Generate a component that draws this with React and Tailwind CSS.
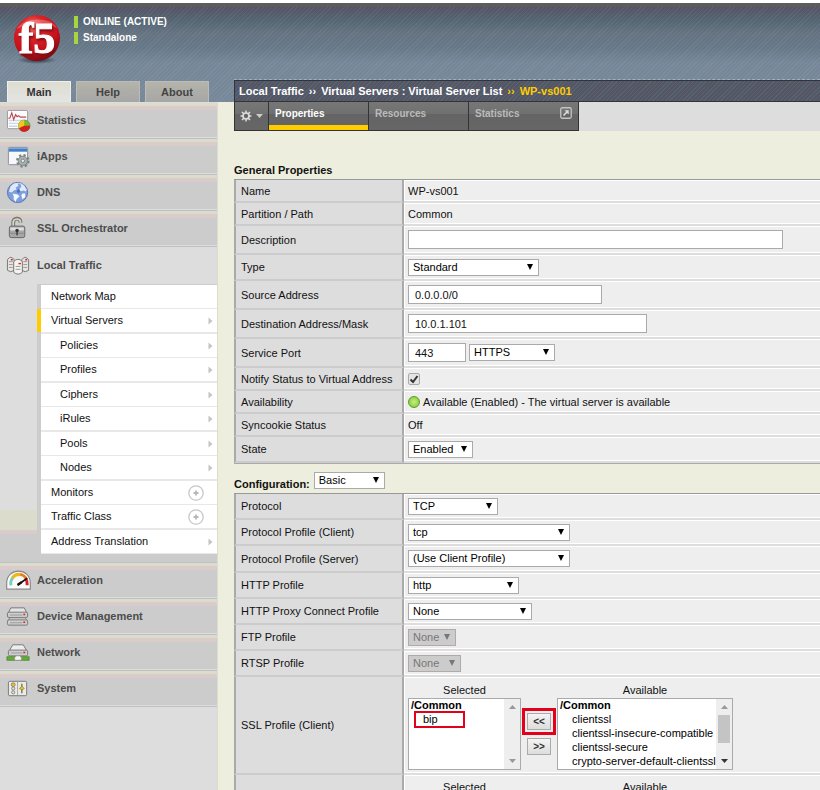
import { useState } from "react";
import clsx from "clsx";

function Logo() {
  return (
    <svg viewBox="0 0 52 52" className="h-[52px] w-[52px] overflow-visible" role="img" aria-label="f5">
      <defs>
        <radialGradient id="ball" cx="0.4" cy="0.25" r="0.8">
          <stop offset="0" stopColor="#f07a76" />
          <stop offset="0.3" stopColor="#dc2429" />
          <stop offset="0.7" stopColor="#c4101a" />
          <stop offset="1" stopColor="#6d0a10" />
        </radialGradient>
        <radialGradient id="floor">
          <stop offset="0" stopColor="#2b3038" />
          <stop offset="1" stopColor="#2b3038" stopOpacity="0" />
        </radialGradient>
      </defs>
      <ellipse cx="26" cy="47" rx="20" ry="4" fill="url(#floor)" />
      <circle cx="26" cy="25" r="23" fill="url(#ball)" />
      <path d="M6 16C12 4 40 3 46 15C34 9 18 9 6 16Z" fill="#fff" opacity="0.25" />
      <text
        x="26"
        y="40"
        textAnchor="middle"
        fontSize="44"
        fontWeight="bold"
        fontFamily="Liberation Serif, serif"
        fill="#fff"
        stroke="#fff"
        className="drop-shadow-[1px_2px_1px_#7c0c12]"
      >
        f5
      </text>
    </svg>
  );
}

const icons = {
  statistics: (
    <>
      <rect x="1.5" y="2.500" width="21" height="19" rx="1.500" fill="#fdfdfd" stroke="#999" />
      <path d="M3 13H21M3 16H14M3 19H12" stroke="#ccd6e6" strokeWidth="1.500" />
      <path d="M2.500 11L4 10.500L6 5L8 12L10 7L11.500 9L13 8L15 9.500H21" fill="none" stroke="#b94a55" strokeWidth="1.200" />
      <circle cx="19" cy="18.500" r="6" fill="#7ab82c" stroke="#665" strokeWidth="0.600" />
      <path d="M19 18.500V12.500A6 6 0 0 0 13.500 21Z" fill="#f2c61c" />
      <path d="M19 18.500L13.500 21A6 6 0 0 0 25 18.500Z" fill="#d3221c" />
    </>
  ),
  iapps: (
    <>
      <rect x="2.500" y="3.500" width="20" height="18" rx="1" fill="#f6f8fb" stroke="#888f99" />
      <path d="M3 4H22V8H3Z" fill="#4680c4" />
      <path d="M3 4.500H22" stroke="#86b4e6" />
      <circle cx="17.500" cy="17.500" r="5.800" fill="none" stroke="#7b8583" strokeWidth="2.600" strokeDasharray="2.300 2.250" />
      <circle cx="17.500" cy="17.500" r="4.800" fill="#a9b2b0" stroke="#7b8583" />
      <circle cx="17.500" cy="17.500" r="1.800" fill="#e9ecec" stroke="#7b8583" />
    </>
  ),
  dns: (
    <>
      <circle cx="12" cy="13" r="10.500" fill="#7f9fdc" stroke="#5573b2" />
      <path d="M4 9C5 5 9 3 12 3.500L13 6L10 8L11 10L8 11L6 13L3 12Z" fill="#dfeafc" />
      <path d="M15 4L19 6L21.500 10L21 12L18 11L15 12L14 9L16 7Z" fill="#dfeafc" />
      <path d="M7 14L12 15L14 17L11 20L10 23L8 20L8 17Z" fill="#f4f8ff" />
      <path d="M17 14L20 14L20 18L17 20L16 16Z" fill="#f4f8ff" />
      <path d="M13 9L15 12L13 14L11 12Z" fill="#4c70bb" />
      <path d="M5 7C8 3 15 2 19 6" stroke="#dce8ff" fill="none" opacity="0.800" />
    </>
  ),
  ssl: (
    <>
      <path d="M7.500 12V7C7.500 1.500 15 1.500 15 6V7" fill="none" stroke="#777769" strokeWidth="4" />
      <path d="M7.500 12V7C7.500 2 15 2 15 6V7" fill="none" stroke="#d8d8cc" strokeWidth="1.800" />
      <rect x="3.500" y="10.500" width="16" height="12" rx="2" fill="#a7a7a7" stroke="#666" />
      <path d="M4.500 12H18.500V15H4.500Z" fill="#dedede" />
      <path d="M4.500 18H18.500" stroke="#888" />
      <circle cx="11.500" cy="15" r="1.800" fill="#333" />
      <path d="M10.800 15H12.200V20H10.800Z" fill="#333" />
    </>
  ),
  traffic: (
    <>
      {[0, 15].map((x) => (
        <g key={x}>
          <path d={`M${x + 1.5} 7Q${x + 5} 2 ${x + 8.5} 7V18Q${x + 5} 21 ${x + 1.5} 18Z`} fill="#e6e6e2" stroke="#777" />
          <path d={`M${x + 3} 9H${x + 7}M${x + 3} 12H${x + 7}M${x + 3} 15H${x + 7}`} stroke="#999" />
          <path d={`M${x + 5} 7H${x + 7}`} stroke="#d22" strokeWidth="1.500" />
        </g>
      ))}
      <path d="M8 9Q12.500 4 17 9V20Q12.500 24 8 20Z" fill="#f3f3f0" stroke="#777" />
      <path d="M10 14H15M10 17H15" stroke="#999" />
      <path d="M13 11H15.500" stroke="#d22" strokeWidth="1.500" />
    </>
  ),
  acceleration: (
    <>
      <path d="M0.700 22V16C0.700 -1 25.300 -1 25.300 16V22Z" fill="#fafafa" stroke="#888" strokeWidth="1.200" />
      <path d="M5 18C4.500 14 5.500 12 7 10" fill="none" stroke="#72cfc6" strokeWidth="3" />
      <path d="M6.500 10.500C9 7 12 6 16 7" fill="none" stroke="#eab818" strokeWidth="3.200" />
      <path d="M15 6.500C18 7.500 20 9 21 11" fill="none" stroke="#ee7a20" strokeWidth="3" />
      <path d="M20.500 11C22 13 22 15 22 18" fill="none" stroke="#d5202a" strokeWidth="3" />
      <path d="M12 18L22 10.500" stroke="#111" strokeWidth="1.800" />
      <path d="M11.500 16.500L16 13.500L17 15.500L13 18.500Z" fill="#111" />
    </>
  ),
  device: (
    <>
      <path d="M2 10L5 4H19L22 10V13H2Z" fill="#e4e4e4" stroke="#777" />
      <rect x="1.500" y="8.500" width="21" height="5.500" rx="1.500" fill="#cfcfcf" stroke="#777" />
      <path d="M4 14.500H20L22 17H2Z" fill="#ececec" stroke="#888" />
      <rect x="1.500" y="16.500" width="21" height="5.500" rx="1.500" fill="#cfcfcf" stroke="#777" />
      <path d="M4 11.500H17M4 19.500H17" stroke="#999" />
      <path d="M18 11H20M18 19H20" stroke="#d22" strokeWidth="1.600" />
    </>
  ),
  network: (
    <>
      <path d="M3 12L7 5H18L22 12Z" fill="#ededed" stroke="#777" />
      <rect x="2.500" y="10.500" width="20" height="6" rx="1.500" fill="#cfcfcf" stroke="#777" />
      <path d="M5 13.500H17" stroke="#999" />
      <path d="M18 13H20" stroke="#d22" strokeWidth="1.600" />
      <rect x="1" y="17.500" width="23" height="3.500" fill="#62b42c" stroke="#4a7a30" strokeWidth="0.800" />
      <path d="M9 21V18L11 16.500H14L16 18V21Z" fill="#f4f4f4" stroke="#888" strokeWidth="0.600" />
    </>
  ),
  system: (
    <>
      <rect x="2.500" y="5.500" width="19" height="15" rx="1.500" fill="#ebebe6" stroke="#777" />
      <path d="M12 6V20" stroke="#aaa" />
      <circle cx="7.500" cy="9" r="2" fill="#f0c020" stroke="#777" strokeWidth="0.800" />
      <circle cx="7.500" cy="13" r="1.700" fill="#ddd" stroke="#777" strokeWidth="0.800" />
      <circle cx="7.500" cy="17" r="1.700" fill="#ddd" stroke="#777" strokeWidth="0.800" />
      <path d="M16.500 8V18" stroke="#666" strokeWidth="1.300" />
      <path d="M14 13L16.500 10.500L19 13L16.500 14.500Z" fill="#f0c020" stroke="#8a7420" strokeWidth="0.700" />
    </>
  ),
};

const topMenu = [
  { name: "Statistics", icon: "statistics" },
  { name: "iApps", icon: "iapps" },
  { name: "DNS", icon: "dns" },
  { name: "SSL Orchestrator", icon: "ssl" },
];

const bottomMenu = [
  { name: "Acceleration", icon: "acceleration" },
  { name: "Device Management", icon: "device" },
  { name: "Network", icon: "network" },
  { name: "System", icon: "system" },
];

const trafficMenu = [
  { name: "Network Map" },
  { name: "Virtual Servers", mark: "arrow", active: true },
  { name: "Policies", mark: "arrow", nested: true },
  { name: "Profiles", mark: "arrow", nested: true },
  { name: "Ciphers", mark: "arrow", nested: true },
  { name: "iRules", mark: "arrow", nested: true },
  { name: "Pools", mark: "arrow", nested: true },
  { name: "Nodes", mark: "arrow", nested: true },
  { name: "Monitors", mark: "plus" },
  { name: "Traffic Class", mark: "plus" },
  { name: "Address Translation", mark: "arrow" },
];

function MenuRow({ item, open }) {
  return (
    <a
      href="#"
      className={clsx(
        "flex items-center gap-[6px] pl-[6px] font-bold text-[#4c4c4c]",
        open
          ? "h-[37px] bg-[#ddd]"
          : "h-9 border-b border-[#bfc0c4] bg-[linear-gradient(#dcdccc_3px,#dbcccc_3px,#dbcccc_7px,#ccc_7px,#ccc_34px,#ddd_34px)]"
      )}
    >
      <svg viewBox="0 0 26 26" className="h-[25px] w-[25px]" aria-hidden="true">
        {icons[item.icon]}
      </svg>
      <span className="pb-px">{item.name}</span>
    </a>
  );
}

function SubMenu() {
  return (
    <ul className="ml-[37px] border-t border-l-4 border-[#ccc] bg-white">
      {trafficMenu.map((item) => (
        <li
          key={item.name}
          className="h-6 border-[#e8e8e8] odd:border-b even:h-[25px] even:border-b-2"
        >
          <a
            href="#"
            className={clsx(
              "-ml-1 flex h-full items-center border-l-4 pr-1",
              item.active ? "border-[#fc0]" : "border-transparent",
              item.nested ? "pl-[19px]" : "pl-[10px]"
            )}
          >
            <span className="flex-1 pb-px">{item.name}</span>
            {item.mark === "arrow" && (
              <svg viewBox="0 0 5 8" className="h-2 w-[5px]" aria-hidden="true">
                <path d="M0.500 0.500L4.500 4L0.500 7.500Z" fill="#c4c4c4" />
              </svg>
            )}
            {item.mark === "plus" && (
              <svg viewBox="0 0 16 16" className="mr-[9px] h-4 w-4" aria-hidden="true">
                <circle cx="8" cy="8" r="7.200" fill="#fff" stroke="#c8c8c8" strokeWidth="1.300" />
                <path d="M8 5.500V10.500M5.500 8H10.500" stroke="#b8b8b8" strokeWidth="1.800" />
              </svg>
            )}
          </a>
        </li>
      ))}
    </ul>
  );
}

function Sidebar() {
  return (
    <nav className="w-[218px] shrink-0 border-r border-[#ddddcf] bg-[#ddd] pt-px">
      {topMenu.map((item) => (
        <MenuRow key={item.name} item={item} />
      ))}
      <MenuRow item={{ name: "Local Traffic", icon: "traffic" }} open />
      <div className="border-b border-[#bfc0c4] bg-[linear-gradient(#ddd_226px,#dcdccc_226px,#dcdccc_246px,#dbcccc_246px,#dbcccc_250px,#ccc_250px)] pb-2">
        <SubMenu />
      </div>
      {bottomMenu.map((item) => (
        <MenuRow key={item.name} item={item} />
      ))}
    </nav>
  );
}

function Select({ id, label, value, width, disabled }) {
  return (
    <span className={clsx("relative inline-block align-middle", width)}>
      <select
        id={id}
        aria-label={label}
        disabled={disabled}
        className={clsx(
          "block h-[17px] w-full appearance-none border pl-1 leading-none opacity-100",
          disabled ? "border-[#b0aaaa] bg-[#ccc] text-[#777]" : "border-[#aaa] bg-white text-black"
        )}
      >
        <option>{value}</option>
      </select>
      <svg
        viewBox="0 0 6 6"
        className={clsx("pointer-events-none absolute top-[5px] right-[6px] h-[6px] w-[6px]", disabled ? "fill-[#777]" : "fill-black")}
        aria-hidden="true"
      >
        <path d="M0 0H6L3 6Z" />
      </svg>
    </span>
  );
}

function TextInput({ id, value = "", width }) {
  const [text, setText] = useState(value);
  return (
    <input
      id={id}
      type="text"
      value={text}
      onChange={(e) => setText(e.target.value)}
      className={clsx("h-[19px] max-w-full border border-[#aaa] bg-white px-[6px] align-middle", width)}
    />
  );
}

function Row({ label, htmlFor, height, children }) {
  return (
    <tr className={height}>
      <th
        scope="row"
        className="w-[170px] border-r-2 border-b-2 border-l-2 border-[#ccc] border-r-[#aaa] border-l-[#aaa] bg-[#ddd] pl-[5px] text-left font-normal"
      >
        {htmlFor ? <label htmlFor={htmlFor}>{label}</label> : label}
      </th>
      <td className="border-b-2 border-[#ddd] bg-[#eee] pl-1 shadow-[inset_1px_1px_0_#fff,inset_0_-1px_0_#fff]">
        {children}
      </td>
    </tr>
  );
}

function PropertyTable({ children }) {
  return (
    <table className="w-full border-separate border-spacing-0 border-t border-[#999]">
      <tbody>{children}</tbody>
    </table>
  );
}

function ScrollBar({ thumb }) {
  return (
    <div className="flex w-4 flex-col items-center justify-between bg-[#eee] py-[6px]" aria-hidden="true">
      <svg viewBox="0 0 7 4" className="h-1 w-[7px]">
        <path d="M0 4L3.500 0L7 4Z" fill="#999" />
      </svg>
      {thumb && <div className="mt-[6px] mb-auto h-7 w-3 bg-[#c4c4c4]" />}
      <svg viewBox="0 0 7 4" className="h-1 w-[7px]">
        <path d="M0 0L3.500 4L7 0Z" fill={thumb ? "#333" : "#999"} />
      </svg>
    </div>
  );
}

function ListBox({ id, label, options, width, thumb, highlight }) {
  return (
    <div className={width}>
      <label htmlFor={id} className="block text-center leading-4">
        {label}
      </label>
      <div className="relative flex h-[72px] border border-[#aaa] bg-white">
        <select id={id} multiple className="min-w-0 flex-1 overflow-hidden bg-white text-black">
          <optgroup label="/Common" className="leading-[14px] font-bold">
            {options.map((option) => (
              <option key={option} className="h-[14px] min-h-0 p-0 pl-[14px] leading-[14px] font-normal">
                {option}
              </option>
            ))}
          </optgroup>
        </select>
        <ScrollBar thumb={thumb} />
        {highlight && <div className="pointer-events-none absolute top-3 left-[5px] h-[17px] w-[51px] border-2 border-[#e2001a]" />}
      </div>
    </div>
  );
}

function MoveButton({ children, label }) {
  return (
    <button
      type="button"
      aria-label={label}
      className="h-[17px] w-6 border border-[#aaa] bg-linear-to-b from-[#f4f4f4] to-[#ddd] text-[10px] leading-none font-bold text-[#333]"
    >
      {children}
    </button>
  );
}

function Header() {
  return (
    <header className="border-t-3 border-white">
      <div className="flex h-[99px] items-end border-t-4 border-[#5c5c5c] bg-[repeating-linear-gradient(135deg,#ffffff0d_0px,#ffffff0d_1px,transparent_1px,transparent_3px),linear-gradient(#555364,#546673_14px,#657281_26px,#667888_40px,#768799_56px,#778899)]">
        <div className="flex h-full w-[234px] shrink-0 flex-col justify-between">
          <div className="flex gap-[11px] pt-[6px] pl-[11px]">
            <Logo />
            <div className="space-y-1 pt-[3px] text-[10px] leading-3 font-bold text-white">
              <p className="border-l-4 border-[#a5d63f] pl-[5px]">ONLINE (ACTIVE)</p>
              <p className="border-l-4 border-[#a5d63f] pl-[5px]">Standalone</p>
            </div>
          </div>
          <div className="flex gap-[5px] pl-[7px] font-bold" role="tablist">
            <button type="button" role="tab" aria-selected="true" className="h-[21px] w-16 border border-b-0 border-[#eee] bg-linear-to-b from-[#ddddd0] to-[#e4e4e4] text-[#333]">
              Main
            </button>
            <button type="button" role="tab" className="h-[21px] w-16 border border-b-0 border-[#bbb] bg-linear-to-b from-[#b4b4aa] to-[#a6a6a6] text-[#444]">
              Help
            </button>
            <button type="button" role="tab" className="h-[21px] w-16 border border-b-0 border-[#bbb] bg-linear-to-b from-[#b4b4aa] to-[#a6a6a6] text-[#444]">
              About
            </button>
          </div>
        </div>
        <div className="min-w-0 flex-1 border-t border-dashed border-[#9fb0bd]">
          <div className="flex h-[22px] items-center gap-[5px] overflow-hidden border border-r-0 border-[#30343c] bg-[repeating-linear-gradient(135deg,#56646e_0px,#56646e_1px,#555566_1px,#555566_3px)] pl-1 font-bold whitespace-nowrap text-white">
            <span>Local Traffic</span>
            <span>››</span>
            <span>Virtual Servers : Virtual Server List</span>
            <span className="text-[#fc0]">››</span>
            <span className="text-[#fc0]">WP-vs001</span>
          </div>
        </div>
      </div>
    </header>
  );
}

function PageTabs() {
  const tab = "flex h-7 items-start border-r border-[#333] bg-[linear-gradient(#777,#707070_12px,#646464_12px,#666)] px-[6px] pt-[5px] text-[10px] font-bold";
  return (
    <div className="flex h-[29px] bg-[#ddd]">
      <div className="flex border-b border-l border-[#333]">
        <button type="button" aria-label="Options" className="flex h-7 w-[34px] items-center justify-center gap-1 border-r border-[#333] bg-[linear-gradient(#777,#707070_12px,#646464_12px,#666)]">
          <svg viewBox="0 0 12 12" className="h-3 w-3" aria-hidden="true">
            <circle cx="6" cy="6" r="3" fill="none" stroke="#ddd" strokeWidth="1.700" />
            <path d="M6 0.500V3M6 9V11.500M0.500 6H3M9 6H11.500M2 2L4 4M8 8L10 10M10 2L8 4M4 8L2 10" stroke="#ddd" strokeWidth="1.500" />
          </svg>
          <svg viewBox="0 0 7 4" className="h-1 w-[7px]" aria-hidden="true">
            <path d="M0 0H7L3.500 4Z" fill="#ccc" />
          </svg>
        </button>
        <a href="#" className={clsx(tab, "w-[100px] text-white shadow-[inset_0_-5px_0_#fc0]")}>Properties</a>
        <a href="#" className={clsx(tab, "w-[100px] text-[#bbb]")}>Resources</a>
        <a href="#" className={clsx(tab, "w-[110px] justify-between text-[#bbb]")}>
          Statistics
          <svg viewBox="0 0 12 12" className="h-3 w-3" aria-hidden="true">
            <rect x="0.750" y="0.750" width="10.500" height="10.500" rx="1.500" fill="none" stroke="#c4c4c4" strokeWidth="1.300" />
            <path d="M3.500 8.500L7 5" stroke="#ddd" strokeWidth="1.600" />
            <path d="M4.500 3.300H8.700V7.500Z" fill="#ddd" />
          </svg>
        </a>
      </div>
    </div>
  );
}

const available = [
  "clientssl",
  "clientssl-insecure-compatible",
  "clientssl-secure",
  "crypto-server-default-clientssl",
];

function ProfilePicker() {
  return (
    <div className="flex items-start pt-0.5">
      <ListBox id="ssl-selected" label="Selected" options={["bip"]} width="w-[113px]" highlight />
      <div className="flex w-9 flex-col items-center gap-2 pt-[31px]">
        <div className="flex outline-3 outline-offset-2 outline-[#e2001a]">
          <MoveButton label="Add">&lt;&lt;</MoveButton>
        </div>
        <MoveButton label="Remove">&gt;&gt;</MoveButton>
      </div>
      <ListBox id="ssl-available" label="Available" options={available} width="w-44" thumb />
    </div>
  );
}

export default function App() {
  const [notify, setNotify] = useState(true);

  return (
    <div className="flex h-screen flex-col overflow-hidden bg-[#edeedd] font-['Liberation_Sans',Arial,sans-serif] text-[11px] leading-[14px] text-[#111]">
      <Header />
      <div className="flex min-h-0 flex-1">
        <Sidebar />
        <main className="min-w-0 flex-1 pl-4">
          <PageTabs />
          <h2 className="pt-8 pb-[2px] font-bold">General Properties</h2>
          <PropertyTable>
            <Row label="Name" height="h-[23px]">WP-vs001</Row>
            <Row label="Partition / Path" height="h-[23px]">Common</Row>
            <Row label="Description" htmlFor="description" height="h-[29px]">
              <TextInput id="description" width="w-[375px]" />
            </Row>
            <Row label="Type" htmlFor="type" height="h-[26px]">
              <Select id="type" value="Standard" width="w-[131px]" />
            </Row>
            <Row label="Source Address" htmlFor="source" height="h-[29px]">
              <TextInput id="source" value="0.0.0.0/0" width="w-[194px]" />
            </Row>
            <Row label="Destination Address/Mask" htmlFor="destination" height="h-[29px]">
              <TextInput id="destination" value="10.0.1.101" width="w-[239px]" />
            </Row>
            <Row label="Service Port" htmlFor="port" height="h-[29px]">
              <div className="flex items-center gap-[3px]">
                <TextInput id="port" value="443" width="w-[58px]" />
                <Select label="Service" value="HTTPS" width="w-[86px]" />
              </div>
            </Row>
            <Row label="Notify Status to Virtual Address" htmlFor="notify" height="h-[23px]">
              <span className="relative block h-3 w-3">
                <input
                  id="notify"
                  type="checkbox"
                  checked={notify}
                  onChange={(e) => setNotify(e.target.checked)}
                  className="block h-3 w-3 appearance-none rounded-xs border border-[#aaa] bg-[#e4e4e4]"
                />
                {notify && (
                  <svg viewBox="0 0 12 12" className="pointer-events-none absolute inset-0" aria-hidden="true">
                    <path d="M2.500 6.500L5 9L9.500 3" fill="none" stroke="#333" strokeWidth="2" />
                  </svg>
                )}
              </span>
            </Row>
            <Row label="Availability" height="h-[23px]">
              <span className="flex items-center gap-[3px]">
                <span className="h-3 w-3 rounded-full border border-[#5f9a28] bg-radial from-[#c4f07a] to-[#7cc62c]" />
                Available (Enabled) - The virtual server is available
              </span>
            </Row>
            <Row label="Syncookie Status" height="h-[23px]">Off</Row>
            <Row label="State" htmlFor="state" height="h-[26px]">
              <Select id="state" value="Enabled" width="w-[65px]" />
            </Row>
          </PropertyTable>

          <div className="flex items-end gap-1 border-t border-[#aaa] pt-2 pb-1">
            <label htmlFor="configuration" className="-mb-0.5 font-bold">Configuration:</label>
            <Select id="configuration" value="Basic" width="w-[71px]" />
          </div>
          <PropertyTable>
            <Row label="Protocol" htmlFor="protocol" height="h-[26px]">
              <Select id="protocol" value="TCP" width="w-[90px]" />
            </Row>
            <Row label="Protocol Profile (Client)" htmlFor="client" height="h-[26px]">
              <Select id="client" value="tcp" width="w-[162px]" />
            </Row>
            <Row label="Protocol Profile (Server)" htmlFor="server" height="h-[27px]">
              <Select id="server" value="(Use Client Profile)" width="w-[162px]" />
            </Row>
            <Row label="HTTP Profile" htmlFor="http" height="h-[26px]">
              <Select id="http" value="http" width="w-[111px]" />
            </Row>
            <Row label="HTTP Proxy Connect Profile" htmlFor="proxy" height="h-[26px]">
              <Select id="proxy" value="None" width="w-[124px]" />
            </Row>
            <Row label="FTP Profile" htmlFor="ftp" height="h-[26px]">
              <Select id="ftp" value="None" width="w-12" disabled />
            </Row>
            <Row label="RTSP Profile" htmlFor="rtsp" height="h-[26px]">
              <Select id="rtsp" value="None" width="w-[53px]" disabled />
            </Row>
            <Row label="SSL Profile (Client)" height="h-[98px]">
              <ProfilePicker />
            </Row>
            <Row height="h-[98px]">
              <div className="flex h-[92px] items-start gap-9 pt-[3px]">
                <span className="w-[113px] text-center">Selected</span>
                <span className="w-44 text-center">Available</span>
              </div>
            </Row>
          </PropertyTable>
        </main>
      </div>
    </div>
  );
}
